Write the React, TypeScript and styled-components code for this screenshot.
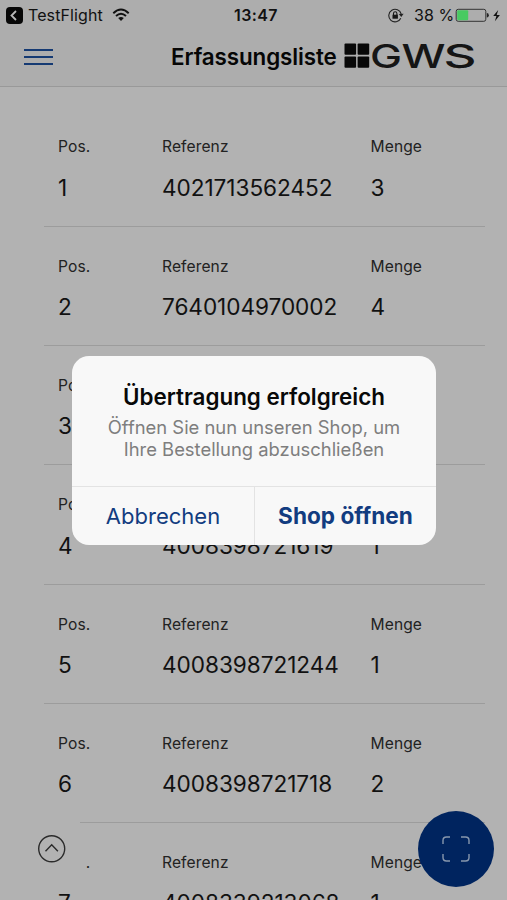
import React from "react";
import styled, { createGlobalStyle } from "styled-components";

const Global = createGlobalStyle`
  * { box-sizing: border-box; }
  body { margin: 0; font-family: Inter, "Liberation Sans", sans-serif; }
`;
const Screen = styled.div`
  position: relative;
  width: 507px;
  height: 900px;
  overflow: hidden;
  background: #b2b2b2;
  color: #111;
`;
const Header = styled.header`
  height: 87px;
  background: #adadad;
  border-bottom: 1px solid #999;
`;
const StatusBar = styled.div`
  display: grid;
  grid-template-columns: 228px 52px 1fr;
  align-items: center;
  height: 30px;
  padding: 0 6px;
`;
const StatusGroup = styled.div<{ $end?: boolean }>`
  display: flex;
  align-items: center;
  justify-content: ${(p) => (p.$end ? "flex-end" : "flex-start")};
  svg { display: block; flex: none; }
`;
const StatusText = styled.span<{ $width: number; $bold?: boolean; $before?: number }>`
  width: ${(p) => p.$width}px;
  margin-left: ${(p) => p.$before ?? 0}px;
  font-size: 16px;
  line-height: 29px;
  white-space: nowrap;
  letter-spacing: ${(p) => (p.$bold ? 0.4 : 0.1)}px;
  font-weight: ${(p) => (p.$bold ? 600 : 400)};
`;
const NavBar = styled.div`
  display: flex;
  align-items: center;
  height: 54px;
  padding-left: 24px;
`;
const MenuButton = styled.button`
  display: flex;
  flex-direction: column;
  gap: 5px;
  width: 29px;
  padding: 0;
  border: 0;
  background: none;
`;
const MenuLine = styled.span`
  height: 2px;
  background: #153a73;
  box-shadow: 0 0 0.6px #153a73;
`;
const Title = styled.h1`
  margin: 0 0 0 118px;
  width: 173px;
  font-size: 22.4px;
  font-weight: 600;
  letter-spacing: -0.1px;
  line-height: 54px;
  white-space: nowrap;
  color: #060606;
`;
const Logo = styled.svg`
  display: block;
  flex: none;
  margin-top: -3px;
  overflow: visible;
`;
const List = styled.main`
  margin: 20.4px 22px 0 44px;
`;
const Row = styled.section`
  display: grid;
  grid-template-columns: 104px 208.5px 1fr;
  height: 119.3px;
  padding: 29px 0 0 14px;
  border-bottom: 1.5px solid #9c9c9c;
`;
const Label = styled.div`
  height: 20px;
  line-height: 21px;
  font-size: 15.6px;
  letter-spacing: 0.1px;
  color: #222;
`;
const Value = styled.div`
  margin-top: 17.3px;
  line-height: 28px;
  height: 28px;
  font-size: 22.6px;
  letter-spacing: -0.05px;
  white-space: nowrap;
`;
const ScrollUp = styled.button`
  position: absolute;
  left: 24px;
  top: 820px;
  width: 62px;
  height: 57px;
  padding: 0;
  border: 0;
  background: #b2b2b2;
  clip-path: polygon(0 0, 56px 0, 56px 6px, 100% 6px, 100% 100%, 0 100%);
  svg { display: block; }
`;
const ScanButton = styled.button`
  position: absolute;
  left: 418px;
  top: 811px;
  display: grid;
  place-items: center;
  width: 76px;
  height: 76px;
  padding: 0;
  border: 0;
  border-radius: 50%;
  background: #00245f;
`;
const Dialog = styled.div`
  position: absolute;
  left: 72px;
  top: 356px;
  width: 364px;
  height: 189px;
  border-radius: 17px;
  overflow: hidden;
  background: #f8f8f8;
  text-align: center;
`;
const Message = styled.div`
  height: 130px;
  padding-top: 26px;
`;
const DialogTitle = styled.h2`
  margin: 0;
  font-size: 22.4px;
  line-height: 30px;
  font-weight: 600;
  color: #080808;
`;
const DialogText = styled.p`
  margin: 4px 0 0;
  font-size: 18.4px;
  line-height: 22px;
  color: #7e7e7e;
`;
const Actions = styled.div`
  display: grid;
  grid-template-columns: 182px 1fr;
  height: 59px;
  border-top: 1px solid #e3e3e3;
`;
const Action = styled.button<{ $primary?: boolean }>`
  padding: 0 0 1px;
  border: 0;
  border-left: ${(p) => (p.$primary ? "1px solid #e3e3e3" : "0")};
  background: none;
  color: #123c80;
  font-family: inherit;
  font-size: ${(p) => (p.$primary ? 22.6 : 22)}px;
  font-weight: ${(p) => (p.$primary ? 700 : 400)};
`;

const items = [
  ["1", "4021713562452", "3"],
  ["2", "7640104970002", "4"],
  ["3", "4008398721602", "1"],
  ["4", "4008398721619", "1"],
  ["5", "4008398721244", "1"],
  ["6", "4008398721718", "2"],
  ["7", "4008339213068", "1"],
];

const BackIcon = () => (
  <svg width="17" height="17" viewBox="0 0 17 17">
    <rect width="17" height="17" rx="4" fill="#080808" />
    <path d="M10 4 5.5 8.5 10 13" fill="none" stroke="#b8b8b8" strokeWidth="1.8" />
  </svg>
);
const WifiIcon = () => (
  <svg width="18" height="14" viewBox="0 0 18 14">
    <path d="M1.3 5.2Q9-2.1 16.7 5.2M4 8Q9 3.4 14 8" fill="none" stroke="#111" strokeWidth="1.9" />
    <path d="M6.2 10Q9 7.8 11.8 10L9 13Z" fill="#111" />
  </svg>
);
const LockIcon = () => (
  <svg width="16" height="15" viewBox="0 0 16 15">
    <path d="M12.8 10.3A6.3 6.3 0 1 1 13.2 6" fill="none" stroke="#222" strokeWidth="1.1" />
    <path d="m10.8 6 4.8-.2-2.3 3.3Z" fill="#222" />
    <rect x="4.5" y="6.7" width="5.4" height="4" fill="#161616" />
    <path d="M5.5 7V5.4a1.7 1.7 0 0 1 3.4 0V7" fill="none" stroke="#161616" strokeWidth="1.1" />
  </svg>
);
const BatteryIcon = () => (
  <svg width="46" height="15" viewBox="0 0 46 15">
    <rect x="1.2" y="1.3" width="29.6" height="12" rx="2" fill="none" stroke="#333" />
    <rect x="2.2" y="2.3" width="11" height="10" rx="1" fill="#48ca61" />
    <path d="M31.8 5q2 0 2 2.3t-2 2.3Z" fill="#222" />
    <path d="m43.2 2-5 6h3.2l-1.5 5.2 5-6.2h-3.2Z" fill="#111" />
  </svg>
);

export default function App() {
  return (
    <>
      <Global />
      <Screen>
        <Header>
          <StatusBar>
            <StatusGroup>
              <BackIcon />
              <StatusText $width={84} $before={5}>TestFlight</StatusText>
              <WifiIcon />
            </StatusGroup>
            <StatusText $width={46} $bold>13:47</StatusText>
            <StatusGroup $end>
              <LockIcon />
              <StatusText $width={41} $before={10}>38 %</StatusText>
              <BatteryIcon />
            </StatusGroup>
          </StatusBar>
          <NavBar>
            <MenuButton aria-label="Menü"><MenuLine /><MenuLine /><MenuLine /></MenuButton>
            <Title>Erfassungsliste</Title>
            <Logo width="136" height="28" viewBox="0 0 136 28" aria-label="GWS">
              <g fill="#080808">
                <rect x=".5" y="1.6" width="11.6" height="11.2" rx="1" />
                <rect x="13.6" y="1.6" width="11.6" height="11.2" rx="1" />
                <rect x=".5" y="14.6" width="11.6" height="11.2" rx="1" />
                <rect x="13.6" y="14.6" width="11.6" height="11.2" rx="1" />
              </g>
              <g fontFamily="Inter" fontSize="32.5" fontWeight="500" fill="#151515">
                <text x="26" y="25.5" textLength="32" lengthAdjust="spacingAndGlyphs">G</text>
                <text x="57.5" y="25.5" textLength="44" lengthAdjust="spacingAndGlyphs">W</text>
                <text x="99.5" y="25.5" textLength="33" lengthAdjust="spacingAndGlyphs">S</text>
              </g>
            </Logo>
          </NavBar>
        </Header>
        <List>
          {items.map(([pos, ref, qty]) => (
            <Row key={pos}>
              <div><Label>Pos.</Label><Value>{pos}</Value></div>
              <div><Label>Referenz</Label><Value>{ref}</Value></div>
              <div><Label>Menge</Label><Value>{qty}</Value></div>
            </Row>
          ))}
        </List>
        <ScrollUp aria-label="Nach oben">
          <svg width="56" height="57" viewBox="0 0 56 57" fill="none" stroke="#2b2b2b" strokeWidth="1.4">
            <circle cx="27.7" cy="28.7" r="13" />
            <path d="m21.5 31.2 6.2-6.5 6.2 6.5" />
          </svg>
        </ScrollUp>
        <ScanButton aria-label="Scannen">
          <svg width="28" height="26" viewBox="0 0 28 26" fill="none" stroke="#8797ad" strokeWidth="1.4">
            <path d="M1 8V4.5Q1 1 4.5 1H8M19 1h4.5Q27 1 27 4.5V8M27 18v3.5q0 3.5-3.5 3.5H19M8 25H4.5Q1 25 1 21.5V18" />
          </svg>
        </ScanButton>
        <Dialog role="dialog">
          <Message>
            <DialogTitle>Übertragung erfolgreich</DialogTitle>
            <DialogText>Öffnen Sie nun unseren Shop, um<br />Ihre Bestellung abzuschließen</DialogText>
          </Message>
          <Actions>
            <Action>Abbrechen</Action>
            <Action $primary>Shop öffnen</Action>
          </Actions>
        </Dialog>
      </Screen>
    </>
  );
}
